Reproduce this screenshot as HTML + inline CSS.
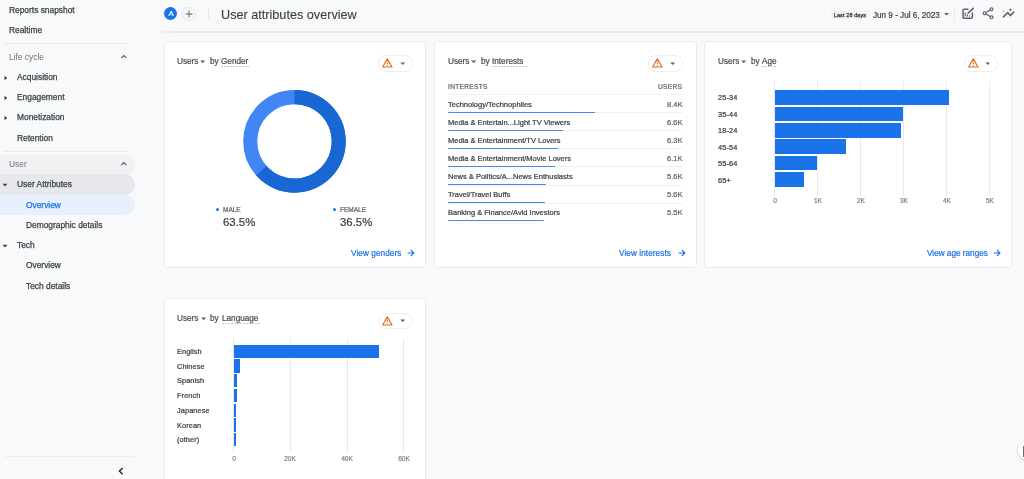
<!DOCTYPE html>
<html><head><meta charset="utf-8"><style>
html,body{margin:0;padding:0;}
body{width:1024px;height:479px;overflow:hidden;position:relative;background:#f8f9fa;font-family:"Liberation Sans",sans-serif;}
.t{position:absolute;white-space:nowrap;will-change:transform;}
.r{position:absolute;}
.card{position:absolute;box-sizing:border-box;background:#fff;border:1px solid #e9ebee;border-radius:4px;}
</style></head><body>
<div class="t" style="top:6.09px;font-size:8.4px;line-height:8.4px;color:#3c4043;left:8.50px;-webkit-text-stroke:0.25px #3c4043;">Reports snapshot</div>
<div class="t" style="top:26.19px;font-size:8.4px;line-height:8.4px;color:#3c4043;left:8.50px;-webkit-text-stroke:0.25px #3c4043;">Realtime</div>
<div class="r" style="left:4.00px;top:43.00px;width:125.00px;height:1.00px;background:#e6e8eb;"></div>
<div class="t" style="top:52.89px;font-size:8.4px;line-height:8.4px;color:#6f7377;left:8.50px;">Life cycle</div>
<svg class="r" style="left:119px;top:53px" width="10" height="8" viewBox="0 0 10 8"><path d="M2.3 5 L4.8 2.5 L7.3 5" fill="none" stroke="#5f6368" stroke-width="1.15"/></svg>
<svg class="r" style="left:3.5px;top:74.6px" width="4" height="6" viewBox="0 0 4 6"><path d="M0.5 0.8 L3.2 3 L0.5 5.2Z" fill="#3c4043"/></svg>
<div class="t" style="top:72.89px;font-size:8.4px;line-height:8.4px;color:#3c4043;left:17.10px;-webkit-text-stroke:0.25px #3c4043;">Acquisition</div>
<svg class="r" style="left:3.5px;top:94.69999999999999px" width="4" height="6" viewBox="0 0 4 6"><path d="M0.5 0.8 L3.2 3 L0.5 5.2Z" fill="#3c4043"/></svg>
<div class="t" style="top:92.99px;font-size:8.4px;line-height:8.4px;color:#3c4043;left:17.10px;-webkit-text-stroke:0.25px #3c4043;">Engagement</div>
<svg class="r" style="left:3.5px;top:115.0px" width="4" height="6" viewBox="0 0 4 6"><path d="M0.5 0.8 L3.2 3 L0.5 5.2Z" fill="#3c4043"/></svg>
<div class="t" style="top:113.29px;font-size:8.4px;line-height:8.4px;color:#3c4043;left:17.10px;-webkit-text-stroke:0.25px #3c4043;">Monetization</div>
<div class="t" style="top:133.89px;font-size:8.4px;line-height:8.4px;color:#3c4043;left:17.10px;-webkit-text-stroke:0.25px #3c4043;">Retention</div>
<div class="r" style="left:4.00px;top:151.00px;width:125.00px;height:1.00px;background:#e6e8eb;"></div>
<div class="r" style="left:-12px;top:154.7px;width:147.3px;height:19.5px;background:#eff1f3;border-radius:0 10px 10px 0"></div>
<div class="r" style="left:-12px;top:174.2px;width:147.3px;height:20.6px;background:#e6e8eb;border-radius:0 10px 10px 0"></div>
<div class="r" style="left:-12px;top:194.8px;width:147.3px;height:20px;background:#e8f0fe;border-radius:0 10px 10px 0"></div>
<div class="t" style="top:159.89px;font-size:8.4px;line-height:8.4px;color:#6f7377;left:8.50px;">User</div>
<svg class="r" style="left:119px;top:160px" width="10" height="8" viewBox="0 0 10 8"><path d="M2.3 5 L4.8 2.5 L7.3 5" fill="none" stroke="#5f6368" stroke-width="1.15"/></svg>
<svg class="r" style="left:2.2px;top:183px" width="6" height="4" viewBox="0 0 6 4"><path d="M0.6 0.8 L5.4 0.8 L3 3.4Z" fill="#3c4043"/></svg>
<div class="t" style="top:180.49px;font-size:8.4px;line-height:8.4px;color:#3c4043;left:17.30px;-webkit-text-stroke:0.25px #3c4043;">User Attributes</div>
<div class="t" style="top:200.79px;font-size:8.4px;line-height:8.4px;color:#1a73e8;left:26.30px;-webkit-text-stroke:0.25px #1a73e8;">Overview</div>
<div class="t" style="top:221.09px;font-size:8.4px;line-height:8.4px;color:#3c4043;left:26.30px;-webkit-text-stroke:0.25px #3c4043;">Demographic details</div>
<svg class="r" style="left:2.2px;top:243.5px" width="6" height="4" viewBox="0 0 6 4"><path d="M0.6 0.8 L5.4 0.8 L3 3.4Z" fill="#3c4043"/></svg>
<div class="t" style="top:240.99px;font-size:8.4px;line-height:8.4px;color:#3c4043;left:17.30px;-webkit-text-stroke:0.25px #3c4043;">Tech</div>
<div class="t" style="top:261.49px;font-size:8.4px;line-height:8.4px;color:#3c4043;left:26.30px;-webkit-text-stroke:0.25px #3c4043;">Overview</div>
<div class="t" style="top:281.79px;font-size:8.4px;line-height:8.4px;color:#3c4043;left:26.30px;-webkit-text-stroke:0.25px #3c4043;">Tech details</div>
<div class="r" style="left:4.00px;top:456.00px;width:130.00px;height:1.00px;background:#eceef0;"></div>
<svg class="r" style="left:116px;top:465px" width="9" height="12" viewBox="0 0 9 12"><path d="M6.6 3 L3.4 6.1 L6.6 9.3" fill="none" stroke="#202124" stroke-width="1.35"/></svg>
<div class="r" style="left:150px;top:31px;width:874px;height:1.5px;background:linear-gradient(90deg,rgba(0,0,0,0) 0,rgba(0,0,0,0.07) 25px);"></div>
<div class="r" style="left:163.8px;top:6.6px;width:13.6px;height:13.6px;border-radius:50%;background:#1a73e8;"></div>
<div class="t" style="top:10.10px;font-size:7.8px;line-height:7.8px;color:#fff;left:70.60px;width:200px;text-align:center;-webkit-text-stroke:0.2px #fff;">A</div>
<div class="r" style="left:181.7px;top:6.8px;width:14.2px;height:14.2px;box-sizing:border-box;border-radius:50%;border:0.8px solid #e3e5e8;background:#f8f9fa"></div>
<svg class="r" style="left:182.6px;top:7.8px" width="12" height="12" viewBox="0 0 12 12"><path d="M6 2.5 V9.5 M2.5 6 H9.5" stroke="#5f6368" stroke-width="1"/></svg>
<div class="r" style="left:208.40px;top:7.00px;width:0.80px;height:13.00px;background:#e8eaed;"></div>
<div class="t" style="top:9.08px;font-size:12.66px;line-height:12.66px;color:#3c4043;left:220.50px;-webkit-text-stroke:0.12px #3c4043;">User attributes overview</div>
<div class="r" style="left:831px;top:10.6px;width:38px;height:8.8px;background:#eff1f2;border-radius:2px"></div>
<div class="t" style="top:12.64px;font-size:5.5px;line-height:5.5px;color:#303134;letter-spacing:0.1px;left:750.00px;width:200px;text-align:center;-webkit-text-stroke:0.25px #303134;">Last 28 days</div>
<div class="t" style="top:11.61px;font-size:8.14px;line-height:8.14px;color:#3c4043;left:872.60px;-webkit-text-stroke:0.2px #3c4043;">Jun 9 - Jul 6, 2023</div>
<svg class="r" style="left:943px;top:12px" width="7" height="5" viewBox="0 0 7 5"><path d="M1 1 L6 1 L3.5 3.6Z" fill="#5f6368"/></svg>
<div class="r" style="left:954.00px;top:7.00px;width:1.00px;height:13.50px;background:#e8eaed;"></div>
<svg class="r" style="left:955px;top:3px" width="65" height="22" viewBox="0 0 65 22">
<path d="M13.4 6.15 H9 Q8.05 6.15 8.05 7.1 V14.2 Q8.05 15.15 9 15.15 H16.4 Q17.35 15.15 17.35 14.2 V9.6" fill="none" stroke="#5f6368" stroke-width="1.5"/>
<path d="M13.1 10.1 L18.2 5.4" stroke="#5f6368" stroke-width="1.6" stroke-linecap="round"/>
<path d="M10.2 9.6 V13.6 M12.4 11.4 V13.6 M14.6 12.4 V13.6" stroke="#5f6368" stroke-width="1.2"/>
<circle cx="36.5" cy="6.35" r="1.45" fill="none" stroke="#5f6368" stroke-width="1.2"/>
<circle cx="29.6" cy="10.2" r="1.45" fill="none" stroke="#5f6368" stroke-width="1.2"/>
<circle cx="36.5" cy="14.3" r="1.45" fill="none" stroke="#5f6368" stroke-width="1.2"/>
<path d="M30.9 9.45 L35.2 7.05 M30.9 10.95 L35.2 13.55" stroke="#5f6368" stroke-width="1.2"/>
<path d="M48.4 13.9 L52.7 9.6 L55.2 12.6 L58.9 9.1" fill="none" stroke="#5f6368" stroke-width="1.5" stroke-linecap="round" stroke-linejoin="round"/>
<path d="M55.4 5.7 V8.1 M54.2 6.9 H56.6" stroke="#5f6368" stroke-width="1"/>
<circle cx="48.7" cy="8.3" r="0.6" fill="#5f6368"/>
</svg>
<div class="card" style="left:164px;top:41px;width:262px;height:227px"></div>
<div class="card" style="left:434px;top:41px;width:263px;height:227px"></div>
<div class="card" style="left:704px;top:41px;width:308px;height:227px"></div>
<div class="card" style="left:164px;top:298px;width:262px;height:222px"></div>
<div class="t" style="top:57.61px;font-size:8.2px;line-height:8.2px;color:#4a4e52;-webkit-text-stroke:0.22px #4a4e52;left:177.00px;">Users</div>
<svg class="r" style="left:200.4px;top:59.949999999999996px" width="6" height="4" viewBox="0 0 6 4"><path d="M0.2 0.6 H5.2 L2.7 3.3Z" fill="#5f6368"/></svg>
<div class="t" style="top:57.61px;font-size:8.2px;line-height:8.2px;color:#4a4e52;-webkit-text-stroke:0.22px #4a4e52;left:210.00px;">by</div>
<div class="t" style="top:57.61px;font-size:8.2px;line-height:8.2px;color:#4a4e52;-webkit-text-stroke:0.22px #4a4e52;left:221.40px;">Gender</div>
<div class="r" style="left:221px;top:66px;width:28px;height:1px;background:repeating-linear-gradient(90deg,#c3c6c9 0 2px,transparent 2px 3px)"></div>
<div class="r" style="left:378.4px;top:55.2px;width:32.4px;height:14.4px;border:0.9px solid #eceef0;border-radius:8px;"></div>
<svg class="r" style="left:382.2px;top:58.2px" width="11" height="10" viewBox="0 0 11 10">
<path d="M5.3 0.9 L10 9 H0.6 Z" fill="none" stroke="#dc6c1a" stroke-width="1.1" stroke-linejoin="round"/>
<path d="M5.3 3.6 V6.3 M5.3 7.1 V8" stroke="#dc6c1a" stroke-width="0.9"/></svg>
<svg class="r" style="left:399.7px;top:61.7px" width="6" height="4" viewBox="0 0 6 4"><path d="M0.3 0.4 H5.2 L2.75 3Z" fill="#5f6368"/></svg>
<svg class="r" style="left:0;top:0" width="1024" height="479">
<circle cx="294.5" cy="141.35" r="44.25" fill="none" stroke="#4285f4" stroke-width="14.099999999999994"/>
<path d="M294.5 97.1 A44.25 44.25 0 1 1 261.308 170.613" fill="none" stroke="#1967d2" stroke-width="14.099999999999994"/>
</svg>
<div class="r" style="left:216.2px;top:208.2px;width:3px;height:3px;border-radius:50%;background:#1a73e8"></div>
<div class="t" style="top:206.80px;font-size:6.5px;line-height:6.5px;color:#5f6368;-webkit-text-stroke:0.22px #5f6368;left:222.50px;">MALE</div>
<div class="t" style="top:217.06px;font-size:11.39px;line-height:11.39px;color:#3c4043;-webkit-text-stroke:0.22px #3c4043;left:222.70px;">63.5%</div>
<div class="r" style="left:333.3px;top:208.2px;width:3px;height:3px;border-radius:50%;background:#1a73e8"></div>
<div class="t" style="top:206.80px;font-size:6.5px;line-height:6.5px;color:#5f6368;-webkit-text-stroke:0.22px #5f6368;left:339.80px;">FEMALE</div>
<div class="t" style="top:217.06px;font-size:11.39px;line-height:11.39px;color:#3c4043;-webkit-text-stroke:0.22px #3c4043;left:339.60px;">36.5%</div>
<div class="t" style="top:249.51px;font-size:8.2px;line-height:8.2px;color:#1a73e8;-webkit-text-stroke:0.22px #1a73e8;letter-spacing:0.08px;left:351.00px;">View genders</div>
<svg class="r" style="left:407.2px;top:249.3px" width="8" height="8" viewBox="0 0 8 8"><path d="M0.6 4 H6.8 M3.9 1 L6.9 4 L3.9 7" fill="none" stroke="#1a73e8" stroke-width="1.1"/></svg>
<div class="t" style="top:57.61px;font-size:8.2px;line-height:8.2px;color:#4a4e52;-webkit-text-stroke:0.22px #4a4e52;left:447.70px;">Users</div>
<svg class="r" style="left:471.09999999999997px;top:59.949999999999996px" width="6" height="4" viewBox="0 0 6 4"><path d="M0.2 0.6 H5.2 L2.7 3.3Z" fill="#5f6368"/></svg>
<div class="t" style="top:57.61px;font-size:8.2px;line-height:8.2px;color:#4a4e52;-webkit-text-stroke:0.22px #4a4e52;left:480.70px;">by</div>
<div class="t" style="top:57.61px;font-size:8.2px;line-height:8.2px;color:#4a4e52;-webkit-text-stroke:0.22px #4a4e52;left:492.10px;">Interests</div>
<div class="r" style="left:492px;top:66px;width:36px;height:1px;background:repeating-linear-gradient(90deg,#c3c6c9 0 2px,transparent 2px 3px)"></div>
<div class="r" style="left:648.4px;top:55.2px;width:32.4px;height:14.4px;border:0.9px solid #eceef0;border-radius:8px;"></div>
<svg class="r" style="left:652.1999999999999px;top:58.2px" width="11" height="10" viewBox="0 0 11 10">
<path d="M5.3 0.9 L10 9 H0.6 Z" fill="none" stroke="#dc6c1a" stroke-width="1.1" stroke-linejoin="round"/>
<path d="M5.3 3.6 V6.3 M5.3 7.1 V8" stroke="#dc6c1a" stroke-width="0.9"/></svg>
<svg class="r" style="left:669.6999999999999px;top:61.7px" width="6" height="4" viewBox="0 0 6 4"><path d="M0.3 0.4 H5.2 L2.75 3Z" fill="#5f6368"/></svg>
<div class="t" style="top:83.71px;font-size:6.6px;line-height:6.6px;color:#5f6368;-webkit-text-stroke:0.22px #5f6368;letter-spacing:0.3px;left:447.80px;">INTERESTS</div>
<div class="t" style="top:83.71px;font-size:6.6px;line-height:6.6px;color:#5f6368;-webkit-text-stroke:0.22px #5f6368;letter-spacing:0.3px;right:341.60px;text-align:right;">USERS</div>
<div class="r" style="left:447.80px;top:94.20px;width:234.30px;height:0.80px;background:#f1f3f4;"></div>
<div class="r" style="left:447.80px;top:112.30px;width:234.30px;height:0.80px;background:#eceef0;"></div>
<div class="r" style="left:447.80px;top:111.50px;width:147.20px;height:1.70px;background:#4488f4;border-radius:1px"></div>
<div class="t" style="top:100.65px;font-size:7.5px;line-height:7.5px;color:#3c4043;-webkit-text-stroke:0.22px #3c4043;left:447.80px;">Technology/Technophiles</div>
<div class="t" style="top:100.65px;font-size:7.5px;line-height:7.5px;color:#5f6368;-webkit-text-stroke:0.22px #5f6368;right:341.90px;text-align:right;">8.4K</div>
<div class="r" style="left:447.80px;top:130.35px;width:234.30px;height:0.80px;background:#eceef0;"></div>
<div class="r" style="left:447.80px;top:129.55px;width:115.50px;height:1.70px;background:#4488f4;border-radius:1px"></div>
<div class="t" style="top:118.70px;font-size:7.5px;line-height:7.5px;color:#3c4043;-webkit-text-stroke:0.22px #3c4043;left:447.80px;">Media &amp; Entertain...Light TV Viewers</div>
<div class="t" style="top:118.70px;font-size:7.5px;line-height:7.5px;color:#5f6368;-webkit-text-stroke:0.22px #5f6368;right:341.90px;text-align:right;">6.6K</div>
<div class="r" style="left:447.80px;top:148.40px;width:234.30px;height:0.80px;background:#eceef0;"></div>
<div class="r" style="left:447.80px;top:147.60px;width:110.20px;height:1.70px;background:#4488f4;border-radius:1px"></div>
<div class="t" style="top:136.75px;font-size:7.5px;line-height:7.5px;color:#3c4043;-webkit-text-stroke:0.22px #3c4043;left:447.80px;">Media &amp; Entertainment/TV Lovers</div>
<div class="t" style="top:136.75px;font-size:7.5px;line-height:7.5px;color:#5f6368;-webkit-text-stroke:0.22px #5f6368;right:341.90px;text-align:right;">6.3K</div>
<div class="r" style="left:447.80px;top:166.45px;width:234.30px;height:0.80px;background:#eceef0;"></div>
<div class="r" style="left:447.80px;top:165.65px;width:107.20px;height:1.70px;background:#4488f4;border-radius:1px"></div>
<div class="t" style="top:154.80px;font-size:7.5px;line-height:7.5px;color:#3c4043;-webkit-text-stroke:0.22px #3c4043;left:447.80px;">Media &amp; Entertainment/Movie Lovers</div>
<div class="t" style="top:154.80px;font-size:7.5px;line-height:7.5px;color:#5f6368;-webkit-text-stroke:0.22px #5f6368;right:341.90px;text-align:right;">6.1K</div>
<div class="r" style="left:447.80px;top:184.50px;width:234.30px;height:0.80px;background:#eceef0;"></div>
<div class="r" style="left:447.80px;top:183.70px;width:97.80px;height:1.70px;background:#4488f4;border-radius:1px"></div>
<div class="t" style="top:172.85px;font-size:7.5px;line-height:7.5px;color:#3c4043;-webkit-text-stroke:0.22px #3c4043;left:447.80px;">News &amp; Politics/A...News Enthusiasts</div>
<div class="t" style="top:172.85px;font-size:7.5px;line-height:7.5px;color:#5f6368;-webkit-text-stroke:0.22px #5f6368;right:341.90px;text-align:right;">5.6K</div>
<div class="r" style="left:447.80px;top:202.55px;width:234.30px;height:0.80px;background:#eceef0;"></div>
<div class="r" style="left:447.80px;top:201.75px;width:97.20px;height:1.70px;background:#4488f4;border-radius:1px"></div>
<div class="t" style="top:190.90px;font-size:7.5px;line-height:7.5px;color:#3c4043;-webkit-text-stroke:0.22px #3c4043;left:447.80px;">Travel/Travel Buffs</div>
<div class="t" style="top:190.90px;font-size:7.5px;line-height:7.5px;color:#5f6368;-webkit-text-stroke:0.22px #5f6368;right:341.90px;text-align:right;">5.6K</div>
<div class="r" style="left:447.80px;top:219.80px;width:95.90px;height:1.70px;background:#4488f4;border-radius:1px"></div>
<div class="t" style="top:208.95px;font-size:7.5px;line-height:7.5px;color:#3c4043;-webkit-text-stroke:0.22px #3c4043;left:447.80px;">Banking &amp; Finance/Avid Investors</div>
<div class="t" style="top:208.95px;font-size:7.5px;line-height:7.5px;color:#5f6368;-webkit-text-stroke:0.22px #5f6368;right:341.90px;text-align:right;">5.5K</div>
<div class="t" style="top:249.51px;font-size:8.2px;line-height:8.2px;color:#1a73e8;-webkit-text-stroke:0.22px #1a73e8;letter-spacing:0.08px;left:619.00px;">View interests</div>
<svg class="r" style="left:677.5px;top:249.3px" width="8" height="8" viewBox="0 0 8 8"><path d="M0.6 4 H6.8 M3.9 1 L6.9 4 L3.9 7" fill="none" stroke="#1a73e8" stroke-width="1.1"/></svg>
<div class="t" style="top:57.61px;font-size:8.2px;line-height:8.2px;color:#4a4e52;-webkit-text-stroke:0.22px #4a4e52;left:718.00px;">Users</div>
<svg class="r" style="left:741.4px;top:59.949999999999996px" width="6" height="4" viewBox="0 0 6 4"><path d="M0.2 0.6 H5.2 L2.7 3.3Z" fill="#5f6368"/></svg>
<div class="t" style="top:57.61px;font-size:8.2px;line-height:8.2px;color:#4a4e52;-webkit-text-stroke:0.22px #4a4e52;left:751.00px;">by</div>
<div class="t" style="top:57.61px;font-size:8.2px;line-height:8.2px;color:#4a4e52;-webkit-text-stroke:0.22px #4a4e52;left:762.40px;">Age</div>
<div class="r" style="left:762px;top:66px;width:15px;height:1px;background:repeating-linear-gradient(90deg,#c3c6c9 0 2px,transparent 2px 3px)"></div>
<div class="r" style="left:963.8px;top:55.2px;width:32.4px;height:14.4px;border:0.9px solid #eceef0;border-radius:8px;"></div>
<svg class="r" style="left:967.5999999999999px;top:58.2px" width="11" height="10" viewBox="0 0 11 10">
<path d="M5.3 0.9 L10 9 H0.6 Z" fill="none" stroke="#dc6c1a" stroke-width="1.1" stroke-linejoin="round"/>
<path d="M5.3 3.6 V6.3 M5.3 7.1 V8" stroke="#dc6c1a" stroke-width="0.9"/></svg>
<svg class="r" style="left:985.0999999999999px;top:61.7px" width="6" height="4" viewBox="0 0 6 4"><path d="M0.3 0.4 H5.2 L2.75 3Z" fill="#5f6368"/></svg>
<div class="r" style="left:774.20px;top:80.80px;width:0.80px;height:115.50px;background:#e8eaed;"></div>
<div class="t" style="top:198.31px;font-size:6.6px;line-height:6.6px;color:#80868b;-webkit-text-stroke:0.22px #80868b;left:674.60px;width:200px;text-align:center;">0</div>
<div class="r" style="left:817.20px;top:80.80px;width:0.80px;height:115.50px;background:#e8eaed;"></div>
<div class="t" style="top:198.31px;font-size:6.6px;line-height:6.6px;color:#80868b;-webkit-text-stroke:0.22px #80868b;left:717.60px;width:200px;text-align:center;">1K</div>
<div class="r" style="left:860.20px;top:80.80px;width:0.80px;height:115.50px;background:#e8eaed;"></div>
<div class="t" style="top:198.31px;font-size:6.6px;line-height:6.6px;color:#80868b;-webkit-text-stroke:0.22px #80868b;left:760.60px;width:200px;text-align:center;">2K</div>
<div class="r" style="left:903.20px;top:80.80px;width:0.80px;height:115.50px;background:#e8eaed;"></div>
<div class="t" style="top:198.31px;font-size:6.6px;line-height:6.6px;color:#80868b;-webkit-text-stroke:0.22px #80868b;left:803.60px;width:200px;text-align:center;">3K</div>
<div class="r" style="left:946.20px;top:80.80px;width:0.80px;height:115.50px;background:#e8eaed;"></div>
<div class="t" style="top:198.31px;font-size:6.6px;line-height:6.6px;color:#80868b;-webkit-text-stroke:0.22px #80868b;left:846.60px;width:200px;text-align:center;">4K</div>
<div class="r" style="left:989.20px;top:80.80px;width:0.80px;height:115.50px;background:#e8eaed;"></div>
<div class="t" style="top:198.31px;font-size:6.6px;line-height:6.6px;color:#80868b;-webkit-text-stroke:0.22px #80868b;left:889.60px;width:200px;text-align:center;">5K</div>
<div class="r" style="left:774.60px;top:90.10px;width:174.30px;height:14.50px;background:#1a73e8;"></div>
<div class="r" style="left:770.60px;top:96.80px;width:3.00px;height:0.80px;background:#e8eaed;"></div>
<div class="t" style="top:94.28px;font-size:7.35px;line-height:7.35px;color:#3c4043;-webkit-text-stroke:0.22px #3c4043;letter-spacing:0.15px;left:718.30px;">25-34</div>
<div class="r" style="left:774.60px;top:106.55px;width:128.20px;height:14.50px;background:#1a73e8;"></div>
<div class="r" style="left:770.60px;top:113.25px;width:3.00px;height:0.80px;background:#e8eaed;"></div>
<div class="t" style="top:110.73px;font-size:7.35px;line-height:7.35px;color:#3c4043;-webkit-text-stroke:0.22px #3c4043;letter-spacing:0.15px;left:718.30px;">35-44</div>
<div class="r" style="left:774.60px;top:123.00px;width:126.20px;height:14.50px;background:#1a73e8;"></div>
<div class="r" style="left:770.60px;top:129.70px;width:3.00px;height:0.80px;background:#e8eaed;"></div>
<div class="t" style="top:127.18px;font-size:7.35px;line-height:7.35px;color:#3c4043;-webkit-text-stroke:0.22px #3c4043;letter-spacing:0.15px;left:718.30px;">18-24</div>
<div class="r" style="left:774.60px;top:139.45px;width:71.00px;height:14.50px;background:#1a73e8;"></div>
<div class="r" style="left:770.60px;top:146.15px;width:3.00px;height:0.80px;background:#e8eaed;"></div>
<div class="t" style="top:143.63px;font-size:7.35px;line-height:7.35px;color:#3c4043;-webkit-text-stroke:0.22px #3c4043;letter-spacing:0.15px;left:718.30px;">45-54</div>
<div class="r" style="left:774.60px;top:155.90px;width:42.40px;height:14.50px;background:#1a73e8;"></div>
<div class="r" style="left:770.60px;top:162.60px;width:3.00px;height:0.80px;background:#e8eaed;"></div>
<div class="t" style="top:160.08px;font-size:7.35px;line-height:7.35px;color:#3c4043;-webkit-text-stroke:0.22px #3c4043;letter-spacing:0.15px;left:718.30px;">55-64</div>
<div class="r" style="left:774.60px;top:172.35px;width:29.40px;height:14.50px;background:#1a73e8;"></div>
<div class="r" style="left:770.60px;top:179.05px;width:3.00px;height:0.80px;background:#e8eaed;"></div>
<div class="t" style="top:176.53px;font-size:7.35px;line-height:7.35px;color:#3c4043;-webkit-text-stroke:0.22px #3c4043;letter-spacing:0.15px;left:718.30px;">65+</div>
<div class="t" style="top:249.51px;font-size:8.2px;line-height:8.2px;color:#1a73e8;-webkit-text-stroke:0.22px #1a73e8;left:926.80px;">View age ranges</div>
<svg class="r" style="left:993.4px;top:249.3px" width="8" height="8" viewBox="0 0 8 8"><path d="M0.6 4 H6.8 M3.9 1 L6.9 4 L3.9 7" fill="none" stroke="#1a73e8" stroke-width="1.1"/></svg>
<div class="t" style="top:314.86px;font-size:8.2px;line-height:8.2px;color:#4a4e52;-webkit-text-stroke:0.22px #4a4e52;left:177.20px;">Users</div>
<svg class="r" style="left:200.6px;top:317.2px" width="6" height="4" viewBox="0 0 6 4"><path d="M0.2 0.6 H5.2 L2.7 3.3Z" fill="#5f6368"/></svg>
<div class="t" style="top:314.86px;font-size:8.2px;line-height:8.2px;color:#4a4e52;-webkit-text-stroke:0.22px #4a4e52;left:210.20px;">by</div>
<div class="t" style="top:314.86px;font-size:8.2px;line-height:8.2px;color:#4a4e52;-webkit-text-stroke:0.22px #4a4e52;left:221.60px;">Language</div>
<div class="r" style="left:222px;top:323px;width:38px;height:1px;background:repeating-linear-gradient(90deg,#c3c6c9 0 2px,transparent 2px 3px)"></div>
<div class="r" style="left:378.3px;top:312.5px;width:32.4px;height:14.4px;border:0.9px solid #eceef0;border-radius:8px;"></div>
<svg class="r" style="left:382.1px;top:315.5px" width="11" height="10" viewBox="0 0 11 10">
<path d="M5.3 0.9 L10 9 H0.6 Z" fill="none" stroke="#dc6c1a" stroke-width="1.1" stroke-linejoin="round"/>
<path d="M5.3 3.6 V6.3 M5.3 7.1 V8" stroke="#dc6c1a" stroke-width="0.9"/></svg>
<svg class="r" style="left:399.6px;top:319.0px" width="6" height="4" viewBox="0 0 6 4"><path d="M0.3 0.4 H5.2 L2.75 3Z" fill="#5f6368"/></svg>
<div class="r" style="left:233.30px;top:338.20px;width:0.80px;height:115.20px;background:#e8eaed;"></div>
<div class="t" style="top:455.91px;font-size:6.6px;line-height:6.6px;color:#80868b;-webkit-text-stroke:0.22px #80868b;left:133.70px;width:200px;text-align:center;">0</div>
<div class="r" style="left:289.90px;top:338.20px;width:0.80px;height:115.20px;background:#e8eaed;"></div>
<div class="t" style="top:455.91px;font-size:6.6px;line-height:6.6px;color:#80868b;-webkit-text-stroke:0.22px #80868b;left:190.30px;width:200px;text-align:center;">20K</div>
<div class="r" style="left:346.50px;top:338.20px;width:0.80px;height:115.20px;background:#e8eaed;"></div>
<div class="t" style="top:455.91px;font-size:6.6px;line-height:6.6px;color:#80868b;-webkit-text-stroke:0.22px #80868b;left:246.90px;width:200px;text-align:center;">40K</div>
<div class="r" style="left:403.10px;top:338.20px;width:0.80px;height:115.20px;background:#e8eaed;"></div>
<div class="t" style="top:455.91px;font-size:6.6px;line-height:6.6px;color:#80868b;-webkit-text-stroke:0.22px #80868b;left:303.50px;width:200px;text-align:center;">60K</div>
<div class="r" style="left:233.70px;top:344.60px;width:145.40px;height:13.30px;background:#1a73e8;"></div>
<div class="r" style="left:229.70px;top:350.90px;width:3.00px;height:0.80px;background:#e8eaed;"></div>
<div class="t" style="top:347.98px;font-size:7.35px;line-height:7.35px;color:#3c4043;-webkit-text-stroke:0.22px #3c4043;letter-spacing:0.1px;left:177.30px;">English</div>
<div class="r" style="left:233.70px;top:359.35px;width:6.40px;height:13.30px;background:#1a73e8;"></div>
<div class="r" style="left:229.70px;top:365.65px;width:3.00px;height:0.80px;background:#e8eaed;"></div>
<div class="t" style="top:362.73px;font-size:7.35px;line-height:7.35px;color:#3c4043;-webkit-text-stroke:0.22px #3c4043;letter-spacing:0.1px;left:177.30px;">Chinese</div>
<div class="r" style="left:233.70px;top:374.10px;width:3.50px;height:13.30px;background:#1a73e8;"></div>
<div class="r" style="left:229.70px;top:380.40px;width:3.00px;height:0.80px;background:#e8eaed;"></div>
<div class="t" style="top:377.48px;font-size:7.35px;line-height:7.35px;color:#3c4043;-webkit-text-stroke:0.22px #3c4043;letter-spacing:0.1px;left:177.30px;">Spanish</div>
<div class="r" style="left:233.70px;top:388.85px;width:3.20px;height:13.30px;background:#1a73e8;"></div>
<div class="r" style="left:229.70px;top:395.15px;width:3.00px;height:0.80px;background:#e8eaed;"></div>
<div class="t" style="top:392.23px;font-size:7.35px;line-height:7.35px;color:#3c4043;-webkit-text-stroke:0.22px #3c4043;letter-spacing:0.1px;left:177.30px;">French</div>
<div class="r" style="left:233.70px;top:403.60px;width:2.30px;height:13.30px;background:#1a73e8;"></div>
<div class="r" style="left:229.70px;top:409.90px;width:3.00px;height:0.80px;background:#e8eaed;"></div>
<div class="t" style="top:406.98px;font-size:7.35px;line-height:7.35px;color:#3c4043;-webkit-text-stroke:0.22px #3c4043;letter-spacing:0.1px;left:177.30px;">Japanese</div>
<div class="r" style="left:233.70px;top:418.35px;width:2.00px;height:13.30px;background:#1a73e8;"></div>
<div class="r" style="left:229.70px;top:424.65px;width:3.00px;height:0.80px;background:#e8eaed;"></div>
<div class="t" style="top:421.73px;font-size:7.35px;line-height:7.35px;color:#3c4043;-webkit-text-stroke:0.22px #3c4043;letter-spacing:0.1px;left:177.30px;">Korean</div>
<div class="r" style="left:233.70px;top:433.10px;width:2.00px;height:13.30px;background:#1a73e8;"></div>
<div class="r" style="left:229.70px;top:439.40px;width:3.00px;height:0.80px;background:#e8eaed;"></div>
<div class="t" style="top:436.48px;font-size:7.35px;line-height:7.35px;color:#3c4043;-webkit-text-stroke:0.22px #3c4043;letter-spacing:0.1px;left:177.30px;">(other)</div>
<div class="r" style="left:1017.8px;top:441.2px;width:19.2px;height:19.2px;border-radius:50%;background:#fff;box-shadow:0 1px 3px rgba(0,0,0,.22)"></div>
<div class="r" style="left:1022.80px;top:445.80px;width:1.20px;height:10.90px;background:#6a6e72;"></div>
</body></html>
